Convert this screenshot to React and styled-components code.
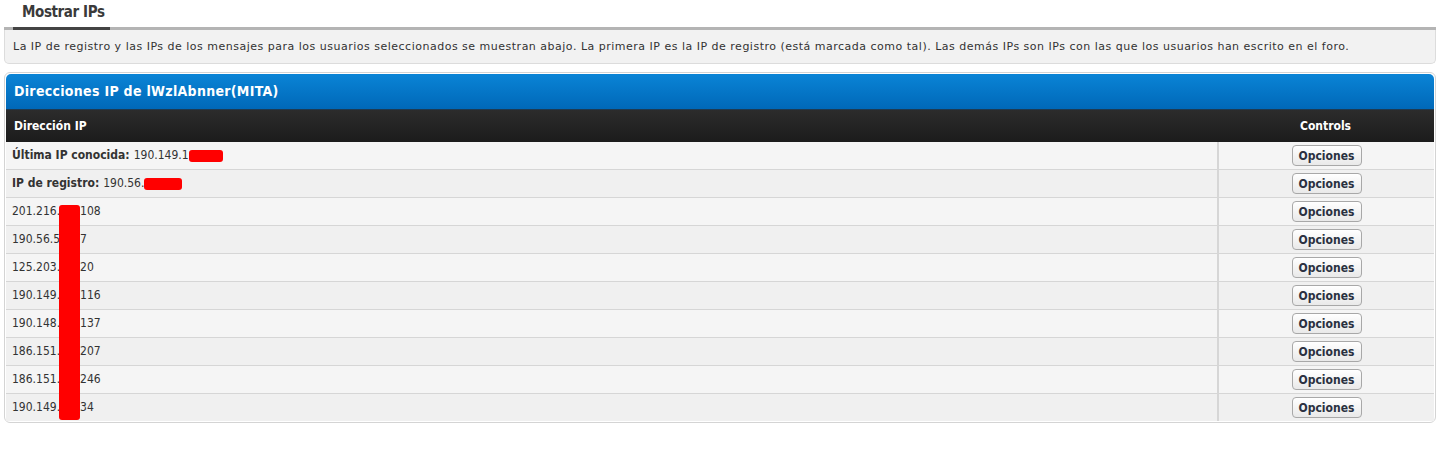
import React from 'react';
import styled, { createGlobalStyle } from 'styled-components';

const GlobalStyle = createGlobalStyle`
  html, body {
    margin: 0;
    padding: 0;
    background: #fff;
  }
  body {
    font-family: 'DejaVu Sans Condensed', 'DejaVu Sans', Verdana, sans-serif;
    color: #333;
  }
`;

const ips = [
  { label: 'Última IP conocida:', prefix: '190.149.1', redact: 34 },
  { label: 'IP de registro:', prefix: '190.56.', redact: 38 },
  { prefix: '201.216.', suffix: '108' },
  { prefix: '190.56.5', suffix: '7' },
  { prefix: '125.203.', suffix: '20' },
  { prefix: '190.149.', suffix: '116' },
  { prefix: '190.148.', suffix: '137' },
  { prefix: '186.151.', suffix: '207' },
  { prefix: '186.151.', suffix: '246' },
  { prefix: '190.149.', suffix: '34' },
];

const Page = styled.div`
  padding: 0 8px 0 4px;
  width: 1432px;
  position: relative;
`;

const TabBar = styled.div`
  display: flex;
  height: 27px;
  border-bottom: 3px solid #b4b4b4;
  padding-left: 9px;
`;

const Tab = styled.div`
  width: 97px;
  box-sizing: border-box;
  padding-left: 9px;
  font-size: 15px;
  font-weight: bold;
  line-height: 24px;
  color: #3a3a3a;
  letter-spacing: -0.4px;
  border-bottom: 3px solid #444;
  margin-bottom: -3px;
`;

const Notice = styled.div`
  background: #f2f2f2;
  border: 1px solid #dcdcdc;
  border-top: none;
  border-radius: 0 0 5px 5px;
  padding: 10px 8px 9px;
  font-family: 'DejaVu Sans', Verdana, sans-serif;
  font-size: 11px;
  letter-spacing: 0.5px;
  line-height: 14px;
  color: #333;
`;

const Panel = styled.div`
  margin-top: 8px;
  border: 1px solid #d4d4d4;
  border-radius: 6px;
  padding: 1px;
  background: #fff;
  position: relative;
`;

const PanelTitle = styled.div`
  height: 35px;
  background: linear-gradient(#0a84d6, #0068b8);
  border-radius: 5px 5px 0 0;
  border-bottom: 1px solid #1d3a52;
  color: #fff;
  font-weight: bold;
  font-size: 14px;
  letter-spacing: 0.3px;
  line-height: 35px;
  padding-left: 8px;
`;

const Table = styled.div`
  display: grid;
  grid-template-columns: 1fr 217px;
`;

const HeadCell = styled.div`
  height: 32px;
  background: linear-gradient(#2c2c2c, #1c1c1c);
  color: #fff;
  font-weight: bold;
  font-size: 12px;
  line-height: 32px;
  padding-left: ${(p) => (p.center ? '0' : '8px')};
  text-align: ${(p) => (p.center ? 'center' : 'left')};
`;

const Cell = styled.div`
  height: 27px;
  background: ${(p) => (p.odd ? '#f0f0f0' : '#f5f5f5')};
  border-top: 1px solid #d6d6d6;
  font-size: 12px;
  line-height: 27px;
  color: #333;
  display: flex;
  align-items: center;
  justify-content: ${(p) => (p.center ? 'center' : 'flex-start')};
  padding-left: ${(p) => (p.center ? '0' : '6px')};
  border-left: ${(p) => (p.center ? '2px solid #d6d6d6' : 'none')};
  ${(p) => (p.first ? 'border-top: none;' : '')}
`;

const Label = styled.b`
  margin-right: 4px;
`;

const Redact = styled.span`
  display: inline-block;
  width: ${(p) => p.w}px;
  height: 12px;
  background: #ff0000;
  border-radius: 3px;
`;

const Button = styled.button`
  font-family: inherit;
  font-size: 12px;
  font-weight: bold;
  color: #2a3140;
  height: 21px;
  width: 70px;
  padding: 0;
  border: 1px solid #a8a8a8;
  border-radius: 4px;
  background: linear-gradient(#ffffff, #e9e9e9);
  box-shadow: inset 0 1px 0 #fff;
`;

const RedactBar = styled.div`
  position: absolute;
  left: 54px;
  top: 132px;
  width: 21px;
  height: 215px;
  background: #ff0000;
  border-radius: 3px;
`;

const Gap = styled.span`
  display: inline-block;
  width: 20px;
`;

export default function App() {
  return (
    <>
      <GlobalStyle />
      <Page>
        <TabBar>
          <Tab>Mostrar IPs</Tab>
        </TabBar>
        <Notice>
          La IP de registro y las IPs de los mensajes para los usuarios seleccionados se muestran abajo. La primera IP es la IP de registro (está marcada como tal). Las demás IPs son IPs con las que los usuarios han escrito en el foro.
        </Notice>
        <Panel>
          <PanelTitle>Direcciones IP de lWzlAbnner(MITA)</PanelTitle>
          <Table>
            <HeadCell>Dirección IP</HeadCell>
            <HeadCell center>Controls</HeadCell>
            {ips.map((ip, i) => (
              <React.Fragment key={i}>
                <Cell odd={i % 2 === 1} first={i === 0}>
                  {ip.label && <Label>{ip.label}</Label>}
                  {ip.prefix}
                  {ip.redact ? <Redact w={ip.redact} /> : <Gap />}
                  {ip.suffix}
                </Cell>
                <Cell odd={i % 2 === 1} first={i === 0} center>
                  <Button>Opciones</Button>
                </Cell>
              </React.Fragment>
            ))}
          </Table>
          <RedactBar />
        </Panel>
      </Page>
    </>
  );
}
